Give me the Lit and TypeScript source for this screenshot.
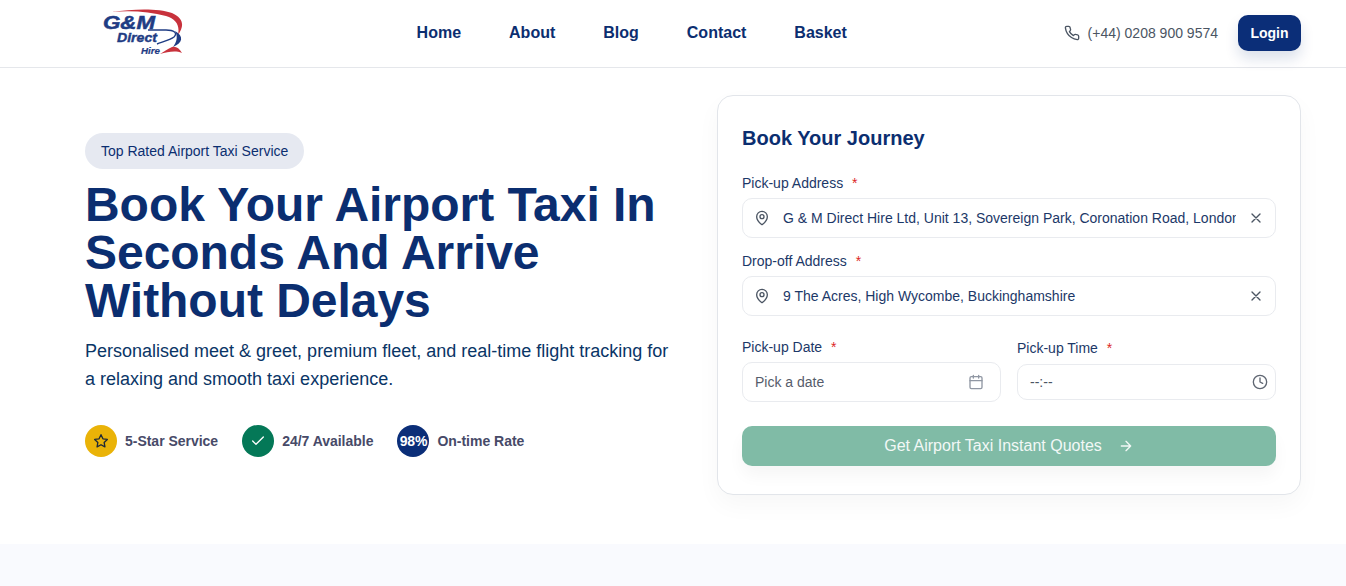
import { LitElement, html, css } from "lit";
import { customElement } from "lit/decorators.js";

const pin = html`<svg class="ic" viewBox="0 0 24 24" width="16" height="16" fill="none" stroke="#4b5563" stroke-width="2" stroke-linecap="round" stroke-linejoin="round"><path d="M20 10c0 5-5.5 10.2-7.4 11.8a1 1 0 0 1-1.2 0C9.5 20.2 4 15 4 10a8 8 0 0 1 16 0"/><circle cx="12" cy="10" r="3"/></svg>`;
const x = html`<svg class="ic" viewBox="0 0 24 24" width="16" height="16" fill="none" stroke="#4b5563" stroke-width="2" stroke-linecap="round" stroke-linejoin="round"><path d="M18 6 6 18M6 6l12 12"/></svg>`;

@customElement("app-root")
export class AppRoot extends LitElement {
  static styles = css`
    :host { display: block; font-family: "Liberation Sans", Arial, sans-serif; height: 586px; overflow: hidden; background: #fff; color: #0b2e70; }
    * { box-sizing: border-box; }
    header { height: 68px; border-bottom: 1px solid #e5e7eb; display: flex; align-items: center; padding: 0 45px 0 100px; }
    .logo { width: 84px; height: 50px; flex: none; margin-top: -4px; margin-right: 232.6px; display: block; }
    .logo text { font-family: "Liberation Sans", Arial, sans-serif; font-weight: 700; font-style: italic; fill: #1f3c84; }
    nav { display: flex; gap: 48px; font-size: 16px; font-weight: 700; color: #0b2e70; margin-top: -2px; }
    .right { margin-left: auto; display: flex; align-items: center; margin-top: -2px; }
    .phone { display: flex; align-items: center; gap: 8px; font-size: 14px; color: #4b5563; margin-right: 20px; }
    .login { width: 63px; height: 36px; border-radius: 10px; background: #0b2e78; color: #fff; font-size: 14px; font-weight: 700; display: flex; align-items: center; justify-content: center; box-shadow: 0 8px 14px rgba(0,45,114,.14); }
    main { display: flex; align-items: center; padding: 27px 45px 49px 85px; height: 476px; }
    .left { width: 632px; flex: none; }
    .badge { display: inline-flex; align-items: center; height: 36px; padding: 0 16px; border-radius: 18px; background: #e6e9f1; font-size: 14px; color: #0b2e70; }
    h1 { margin: 12px 0 0; font-size: 48px; line-height: 48px; font-weight: 700; color: #0b2e70; letter-spacing: -.04px; }
    .sub { margin: 12px 0 0; font-size: 18px; line-height: 28px; color: #0a3566; width: 590px; }
    .stats { display: flex; gap: 24px; margin-top: 32px; }
    .stat { display: flex; align-items: center; gap: 8px; font-size: 14px; font-weight: 700; color: #474a68; letter-spacing: -.02px; }
    .dot { width: 32px; height: 32px; border-radius: 50%; display: flex; align-items: center; justify-content: center; flex: none; }
    .y { background: #eab308; }
    .g { background: #047857; }
    .b { background: #0b2e78; color: #fff; font-size: 14px; letter-spacing: -.2px; }
    .card { width: 584px; height: 400px; flex: none; border: 1px solid #e2e5ea; border-radius: 16px; padding: 24px; background: #fff; box-shadow: 0 10px 24px rgba(0,0,0,.035); }
    h2 { margin: 6px 0 0; font-size: 20px; line-height: 24px; font-weight: 700; color: #0b2e70; }
    label { display: block; font-size: 14px; line-height: 20px; color: #1c3868; }
    label i { font-style: normal; color: #dc2626; margin-left: 5px; }
    .f1 { margin-top: 23px; }
    .f2 { margin-top: 13px; }
    .input { margin-top: 5px; height: 40px; border: 1px solid #e9ebef; border-radius: 10px; display: flex; align-items: center; padding: 0 11px; font-size: 14px; color: #1c3868; background: #fff; }
    .input .t { flex: 1; min-width: 0; white-space: nowrap; overflow: hidden; margin: 0 12px 0 13px; }
    .ic { flex: none; }
    .two { display: grid; grid-template-columns: 1fr 1fr; gap: 16px; margin-top: 21px; }
    .ph { color: #565c6b; flex: 1; }
    .date { padding: 0 16px 0 12px; }
    .time { height: 36px; margin-top: 6px; padding: 0 7px 0 12px; }
    .time .ph { color: #4b5563; }
    .tl { margin-top: 1px; }
    .btn { margin-top: 24px; height: 40px; border-radius: 10px; background: #80bba6; color: #f2f8f6; font-size: 16px; display: flex; align-items: center; justify-content: center; gap: 16px; box-shadow: 0 10px 16px rgba(0,0,0,.04); }
    .band { height: 42px; background: #f9fafe; }
  `;

  render() {
    return html`
      <header>
        <svg class="logo" viewBox="0 0 84 50">
          <path d="M12 5C32 2 58 1 72 6 83 11 85 18 78 28 80 18 76 12 66 9 50 5 32 3 12 5Z" fill="#c8323c"/>
          <path d="M48 23H66C74 23 78 26 74 30 70 33 62 35 57 37" fill="none" stroke="#1f3c84" stroke-width="1.4"/>
          <path d="M75 24C84 29 83 36 73 40 77 35 78 29 75 24Z" fill="#1f3c84"/>
          <path d="M60 47C68 45 75 43 82 46 79 41 76 39 72 40 67 42 64 45 60 47Z" fill="#c8323c"/>
          <text x="3" y="21.5" font-size="18" textLength="52" lengthAdjust="spacingAndGlyphs" stroke="#1f3c84" stroke-width=".5">G&amp;M</text>
          <text x="17" y="34.5" font-size="13" textLength="40" lengthAdjust="spacingAndGlyphs" stroke="#1f3c84" stroke-width=".4">Direct</text>
          <text x="41" y="46.5" font-size="9" textLength="19" lengthAdjust="spacingAndGlyphs" stroke="#1f3c84" stroke-width=".2">Hire</text>
        </svg>
        <nav><span>Home</span><span>About</span><span>Blog</span><span>Contact</span><span>Basket</span></nav>
        <div class="right">
          <div class="phone">
            <svg viewBox="0 0 24 24" width="16" height="16" fill="none" stroke="#4b5563" stroke-width="2" stroke-linecap="round" stroke-linejoin="round"><path d="M22 16.9v3a2 2 0 0 1-2.2 2 19.8 19.8 0 0 1-8.6-3.1 19.5 19.5 0 0 1-6-6A19.8 19.8 0 0 1 2.1 4.2 2 2 0 0 1 4.1 2h3a2 2 0 0 1 2 1.7c.1 1 .4 1.9.7 2.8a2 2 0 0 1-.5 2.1L8.1 9.9a16 16 0 0 0 6 6l1.3-1.3a2 2 0 0 1 2.1-.4c.9.3 1.8.6 2.8.7a2 2 0 0 1 1.7 2z"/></svg>
            <span>(+44) 0208 900 9574</span>
          </div>
          <div class="login">Login</div>
        </div>
      </header>
      <main>
        <div class="left">
          <div class="badge">Top Rated Airport Taxi Service</div>
          <h1>Book Your Airport Taxi In<br>Seconds And Arrive<br>Without Delays</h1>
          <p class="sub">Personalised meet &amp; greet, premium fleet, and real-time flight tracking for a relaxing and smooth taxi experience.</p>
          <div class="stats">
            <div class="stat"><span class="dot y"><svg viewBox="0 0 24 24" width="16" height="16" fill="none" stroke="#1f2937" stroke-width="2" stroke-linejoin="round"><path d="M12 2.5l2.9 6.2 6.6.9-4.8 4.6 1.2 6.6L12 17.6l-5.9 3.2 1.2-6.6-4.8-4.6 6.6-.9z"/></svg></span>5-Star Service</div>
            <div class="stat"><span class="dot g"><svg viewBox="0 0 24 24" width="16" height="16" fill="none" stroke="#fff" stroke-width="2" stroke-linecap="round" stroke-linejoin="round"><path d="M20 6 9 17l-5-5"/></svg></span>24/7 Available</div>
            <div class="stat"><span class="dot b">98%</span>On-time Rate</div>
          </div>
        </div>
        <div class="card">
          <h2>Book Your Journey</h2>
          <div class="f1">
            <label>Pick-up Address <i>*</i></label>
            <div class="input">${pin}<span class="t">G &amp; M Direct Hire Ltd, Unit 13, Sovereign Park, Coronation Road, London</span>${x}</div>
          </div>
          <div class="f2">
            <label>Drop-off Address <i>*</i></label>
            <div class="input">${pin}<span class="t">9 The Acres, High Wycombe, Buckinghamshire</span>${x}</div>
          </div>
          <div class="two">
            <div>
              <label>Pick-up Date <i>*</i></label>
              <div class="input date"><span class="ph">Pick a date</span>
                <svg class="ic" viewBox="0 0 24 24" width="16" height="16" fill="none" stroke="#9097a3" stroke-width="2" stroke-linecap="round" stroke-linejoin="round"><path d="M8 2v4M16 2v4"/><rect x="3" y="4" width="18" height="18" rx="2"/><path d="M3 10h18"/></svg>
              </div>
            </div>
            <div>
              <label class="tl">Pick-up Time <i>*</i></label>
              <div class="input time"><span class="ph">--:--</span>
                <svg class="ic" viewBox="0 0 24 24" width="16" height="16" fill="none" stroke="#5f6672" stroke-width="2" stroke-linecap="round" stroke-linejoin="round"><circle cx="12" cy="12" r="10"/><path d="M12 6v6l4 2"/></svg>
              </div>
            </div>
          </div>
          <div class="btn"><span>Get Airport Taxi Instant Quotes</span>
            <svg viewBox="0 0 24 24" width="16" height="16" fill="none" stroke="#f2f8f6" stroke-width="2" stroke-linecap="round" stroke-linejoin="round"><path d="M5 12h14M12 5l7 7-7 7"/></svg>
          </div>
        </div>
      </main>
      <div class="band"></div>
    `;
  }
}
